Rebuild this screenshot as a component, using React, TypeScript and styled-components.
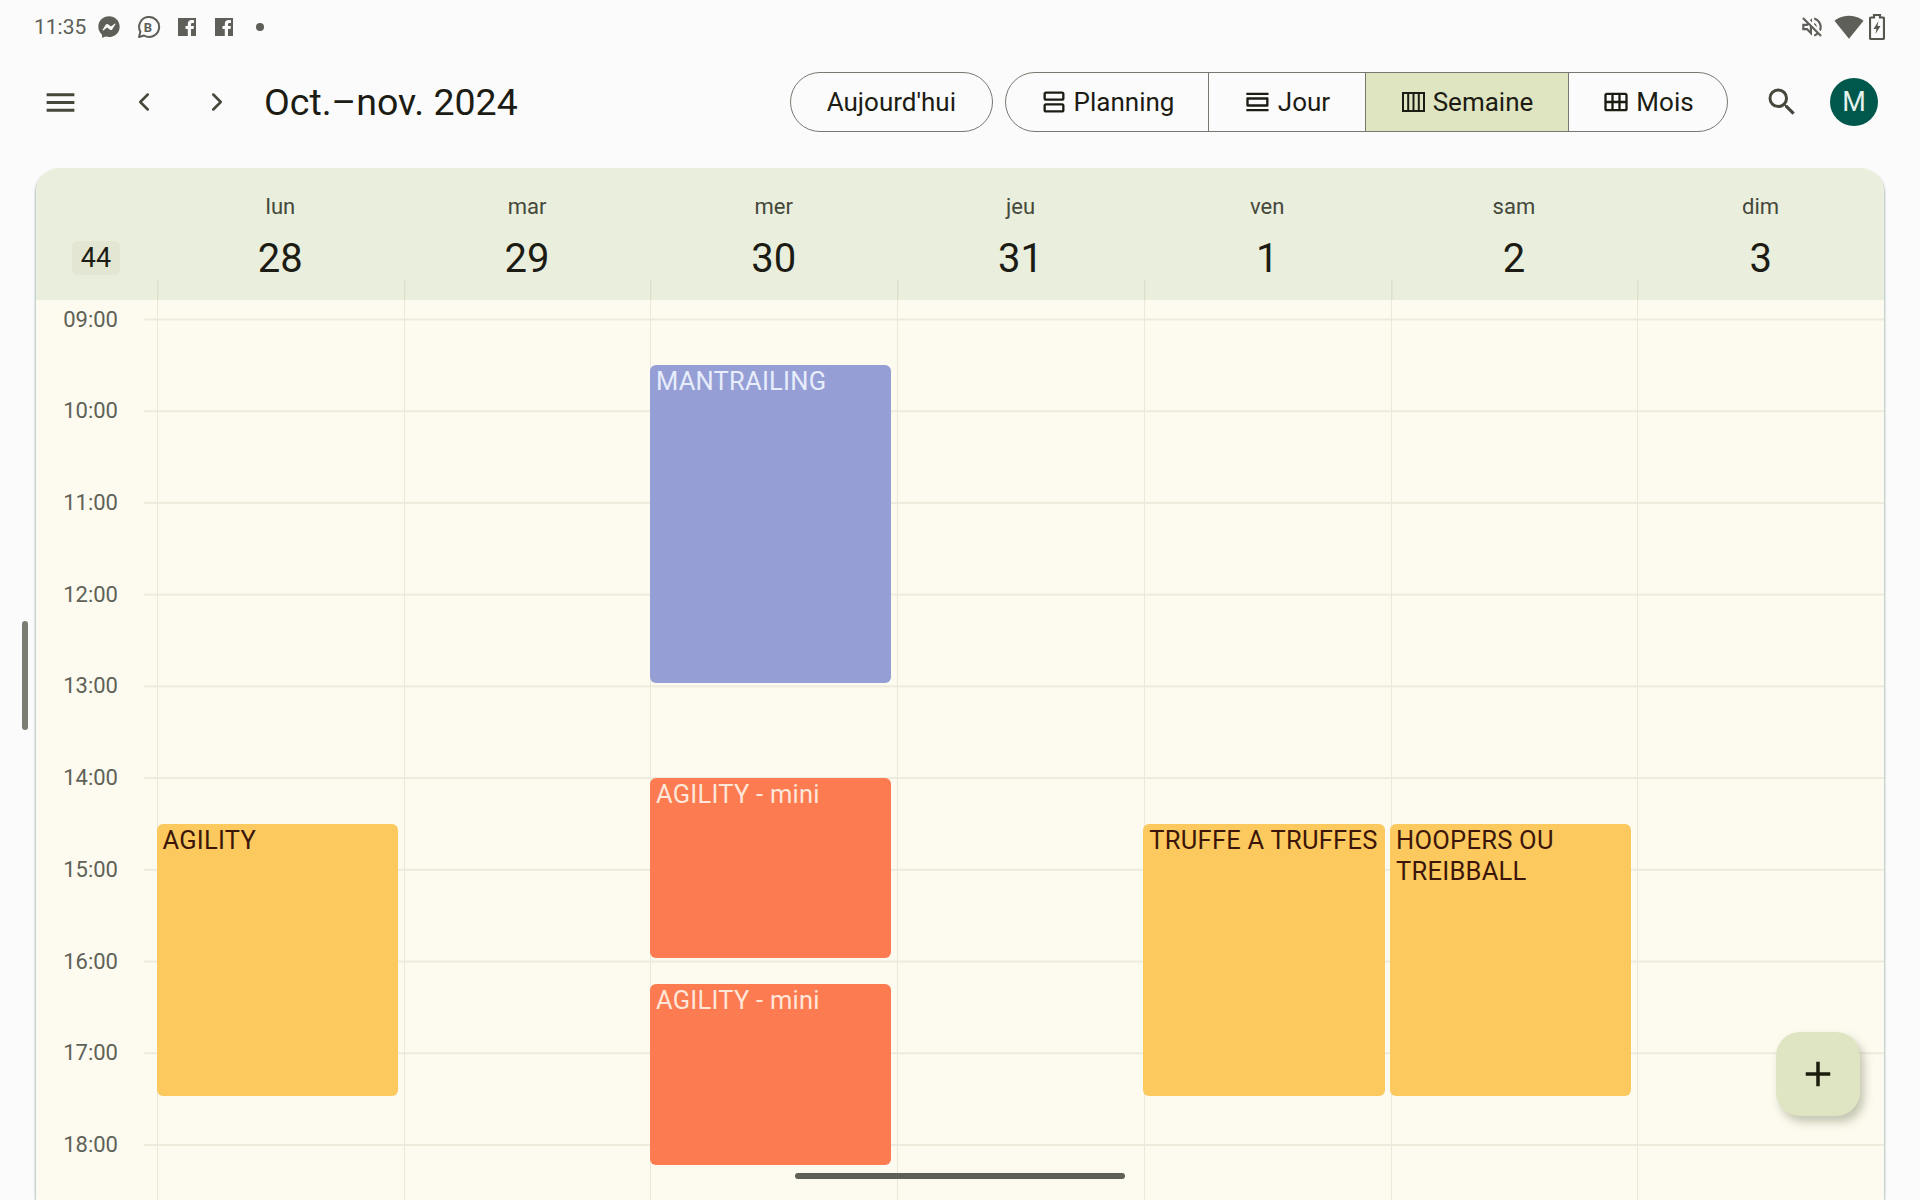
import React from "react";
import styled, { createGlobalStyle } from "styled-components";
import { ChevronLeft, ChevronRight } from "lucide-react";
import { FaFacebookMessenger } from "react-icons/fa";
import {
  MdAdd,
  MdMenu,
  MdOutlineCalendarViewMonth,
  MdOutlineViewAgenda,
  MdOutlineViewDay,
  MdOutlineVolumeOff,
  MdSearch,
  MdSignalWifi4Bar,
} from "react-icons/md";

const HOUR = 91.72;

const GlobalStyle = createGlobalStyle`
  html, body, #root {
    margin: 0;
    height: 100%;
  }

  body {
    background: #fafbfa;
    font-family: Roboto, "Noto Sans", sans-serif;
    overflow: hidden;
  }
`;

const Screen = styled.div`
  display: flex;
  flex-direction: column;
  position: relative;
  width: 1920px;
  height: 1200px;
  overflow: hidden;
`;

const StatusBar = styled.div`
  display: flex;
  align-items: center;
  height: 54px;
  padding: 0 35px 0 34px;
  color: #5d5f58;
  font-size: 21px;
  flex-shrink: 0;
`;

const StatusLeft = styled.div`
  display: flex;
  align-items: center;
  gap: 15px;
`;

const StatusTime = styled.span`
  margin-right: -3px;
`;

const StatusRight = styled.div`
  display: flex;
  align-items: center;
  gap: 9px;
  margin-left: auto;
`;

const WifiIcon = styled(MdSignalWifi4Bar)`
  margin-right: -4px;
`;

const Dot = styled.span`
  width: 8px;
  height: 8px;
  margin-left: 6px;
  border-radius: 50%;
  background: #5d5f58;
`;

const Toolbar = styled.div`
  display: flex;
  align-items: center;
  height: 96px;
  padding: 0 42px 0 36px;
  flex-shrink: 0;
`;

const IconButton = styled.div<{ $left?: number }>`
  display: flex;
  align-items: center;
  justify-content: center;
  width: 48px;
  height: 48px;
  margin-left: ${(p) => p.$left ?? 0}px;
  color: #44483b;
  flex-shrink: 0;
`;

const Title = styled.h1`
  margin: 0 0 0 23px;
  font-size: 37.5px;
  font-weight: 400;
  color: #1c1c14;
`;

const TodayPill = styled.div`
  display: flex;
  align-items: center;
  height: 60px;
  box-sizing: border-box;
  margin-left: auto;
  padding: 0 36px;
  border: 1.5px solid #777970;
  border-radius: 30px;
  font-size: 26px;
  color: #1c1c14;
`;

const Segments = styled.div`
  display: flex;
  height: 60px;
  box-sizing: border-box;
  margin: 0 30px 0 12px;
  border: 1.5px solid #777970;
  border-radius: 30px;
  overflow: hidden;
`;

const Segment = styled.div<{ $active?: boolean; $first?: boolean; $width: number }>`
  display: flex;
  align-items: center;
  justify-content: center;
  gap: 6px;
  width: ${(p) => p.$width}px;
  box-sizing: border-box;
  border-left: ${(p) => (p.$first ? "0" : "1.5px solid #777970")};
  background: ${(p) => (p.$active ? "#e0e5c1" : "transparent")};
  font-size: 26px;
  color: #1c1c14;
`;

const Avatar = styled.div`
  display: flex;
  align-items: center;
  justify-content: center;
  width: 48px;
  height: 48px;
  margin-left: 24px;
  border-radius: 50%;
  background: #00574b;
  color: #e6f2ee;
  font-size: 27px;
`;

const Card = styled.div`
  display: flex;
  flex-direction: column;
  flex: 1;
  min-height: 0;
  margin: 18px 36px 0;
  border-radius: 24px 24px 0 0;
  background: #fdfbef;
  box-shadow: -2px 1px 2px -1px rgba(110, 140, 140, 0.5), 2px 1px 2px -1px rgba(110, 140, 140, 0.5);
  overflow: hidden;
`;

const HeaderRow = styled.div`
  display: grid;
  grid-template-columns: 121px repeat(7, 1fr);
  height: 132px;
  background: #eaeedc;
  flex-shrink: 0;
`;

const WeekCell = styled.div`
  display: flex;
  align-items: flex-start;
  justify-content: center;
  padding-top: 73px;
`;

const WeekBadge = styled.div`
  display: flex;
  align-items: center;
  justify-content: center;
  width: 48px;
  height: 34px;
  margin-right: 1px;
  border-radius: 6px;
  background: #e2e6d3;
  font-size: 27px;
  color: #1c1c14;
`;

const DayHead = styled.div`
  display: flex;
  flex-direction: column;
  align-items: center;
  padding-top: 26px;
  background: linear-gradient(#dde0ca, #dde0ca) left bottom / 1.5px 20px no-repeat;
`;

const DayName = styled.div`
  height: 26px;
  line-height: 26px;
  font-size: 22px;
  color: #44483b;
`;

const DayNumber = styled.div`
  height: 48px;
  margin-top: 15px;
  line-height: 48px;
  font-size: 40px;
  color: #1c1c14;
`;

const Body = styled.div`
  display: grid;
  grid-template-columns: 121px repeat(7, 1fr);
  flex: 1;
  min-height: 0;
  overflow: hidden;
`;

const Gutter = styled.div`
  display: flex;
  flex-direction: column;
  align-items: flex-end;
  gap: ${HOUR - 30}px;
  padding: 4.5px 39px 0 0;
  background: linear-gradient(to bottom, #ecebdc 1.5px, transparent 1.5px) right 0 top 18.5px / 13px ${HOUR}px repeat-y;
`;

const TimeLabel = styled.div`
  height: 30px;
  line-height: 30px;
  font-size: 22px;
  color: #5f6157;
`;

const DayColumn = styled.div`
  display: grid;
  grid-template-columns: 1fr;
  grid-auto-rows: ${HOUR / 4}px;
  padding-top: 19.5px;
  border-left: 1.5px solid #e9e9d9;
  background: linear-gradient(to bottom, #ecebdc 1.5px, transparent 1.5px) 0 18.5px / 100% ${HOUR}px repeat-y;
`;

const eventColors = {
  blue: { bg: "#959fd6", fg: "#e8edfb" },
  orange: { bg: "#fd7b50", fg: "#fee6da" },
  yellow: { bg: "#fcc95f", fg: "#3b1608" },
};

const Event = styled.div<{ $start: number; $span: number; $tone: keyof typeof eventColors }>`
  grid-row: ${(p) => p.$start + 1} / span ${(p) => p.$span};
  grid-column: 1;
  margin: 0 6px 3px -1.5px;
  padding: 1px 0 0 6px;
  border-radius: 6px;
  background: ${(p) => eventColors[p.$tone].bg};
  color: ${(p) => eventColors[p.$tone].fg};
  font-size: 25.5px;
  letter-spacing: 0.25px;
  line-height: 31px;
`;

const ScrollThumb = styled.div`
  position: absolute;
  left: 22px;
  top: 621px;
  width: 6px;
  height: 109px;
  border-radius: 3px;
  background: #7b7d72;
`;

const HomeBar = styled.div`
  position: absolute;
  left: 795px;
  top: 1173px;
  width: 330px;
  height: 6px;
  border-radius: 3px;
  background: #5e6058;
`;

const Fab = styled.div`
  position: absolute;
  left: 1776px;
  top: 1032px;
  display: flex;
  align-items: center;
  justify-content: center;
  width: 84px;
  height: 84px;
  border-radius: 24px;
  background: #dfe4c2;
  color: #1c1c0c;
  box-shadow: 4px 6px 10px rgba(90, 95, 60, 0.35);
`;

const days = [
  { name: "lun", num: 28 },
  { name: "mar", num: 29 },
  { name: "mer", num: 30 },
  { name: "jeu", num: 31 },
  { name: "ven", num: 1 },
  { name: "sam", num: 2 },
  { name: "dim", num: 3 },
];

const hours = ["09:00", "10:00", "11:00", "12:00", "13:00", "14:00", "15:00", "16:00", "17:00", "18:00"];

type Ev = { day: number; title: string; start: number; span: number; tone: keyof typeof eventColors };

// start and span are in quarter hours from 09:00
const events: Ev[] = [
  { day: 0, title: "AGILITY", start: 22, span: 12, tone: "yellow" },
  { day: 2, title: "MANTRAILING", start: 2, span: 14, tone: "blue" },
  { day: 2, title: "AGILITY - mini", start: 20, span: 8, tone: "orange" },
  { day: 2, title: "AGILITY - mini", start: 29, span: 8, tone: "orange" },
  { day: 4, title: "TRUFFE A TRUFFES", start: 22, span: 12, tone: "yellow" },
  { day: 5, title: "HOOPERS OU TREIBBALL", start: 22, span: 12, tone: "yellow" },
];

const BusinessChat = () => (
  <svg width="26" height="26" viewBox="0 0 26 26" fill="none" stroke="currentColor" strokeWidth="2">
    <path d="M4 23l1.400-5.200A10 10 0 1 1 9 21.500z" strokeLinejoin="round" />
    <text x="13" y="17.500" fontSize="13" fontWeight="700" textAnchor="middle" fill="currentColor" stroke="none">
      B
    </text>
  </svg>
);

const FacebookSquare = () => (
  <svg width="22" height="22" viewBox="0 0 22 22">
    <path
      fillRule="evenodd"
      fill="currentColor"
      d="M2 2h18v18h-5v-7h2.500l.5-3h-3V8.500c0-1 .4-1.500 1.500-1.500H18V4.300c-.6-.1-1.500-.2-2.400-.2-2.300 0-3.800 1.400-3.800 3.900V10H9.500v3h2.300v7H2z"
    />
  </svg>
);

const WeekIcon = () => (
  <svg width="26" height="22" viewBox="0 0 26 22" fill="none" stroke="currentColor" strokeWidth="2">
    <rect x="2" y="2" width="21" height="18" />
    <path d="M7.200 2v18M12.500 2v18M17.800 2v18" />
  </svg>
);

const Battery = () => (
  <svg width="16" height="26" viewBox="0 0 16 26" fill="none">
    <path d="M5 1h6v2.500h3a1 1 0 0 1 1 1V24a1 1 0 0 1-1 1H2a1 1 0 0 1-1-1V4.500a1 1 0 0 1 1-1h3z" stroke="#55574f" strokeWidth="2.200" />
    <path d="M9.500 7l-5 8h3l-1 5 5-8h-3z" fill="#55574f" />
  </svg>
);

const App: React.FC = () => {
  return (
    <Screen>
      <GlobalStyle />
      <StatusBar>
        <StatusLeft>
          <StatusTime>11:35</StatusTime>
          <FaFacebookMessenger size={22} />
          <BusinessChat />
          <FacebookSquare />
          <FacebookSquare />
          <Dot />
        </StatusLeft>
        <StatusRight>
          <MdOutlineVolumeOff size={26} />
          <WifiIcon size={30} />
          <Battery />
        </StatusRight>
      </StatusBar>
      <Toolbar>
        <IconButton>
          <MdMenu size={37} />
        </IconButton>
        <IconButton $left={36}>
          <ChevronLeft size={30} />
        </IconButton>
        <IconButton $left={25}>
          <ChevronRight size={30} />
        </IconButton>
        <Title>Oct.–nov. 2024</Title>
        <TodayPill>Aujourd'hui</TodayPill>
        <Segments>
          <Segment $first $width={202}>
            <MdOutlineViewAgenda size={28} />
            Planning
          </Segment>
          <Segment $width={157}>
            <MdOutlineViewDay size={28} />
            Jour
          </Segment>
          <Segment $active $width={203}>
            <WeekIcon />
            Semaine
          </Segment>
          <Segment $width={159}>
            <MdOutlineCalendarViewMonth size={28} />
            Mois
          </Segment>
        </Segments>
        <IconButton>
          <MdSearch size={36} />
        </IconButton>
        <Avatar>M</Avatar>
      </Toolbar>
      <Card>
        <HeaderRow>
          <WeekCell>
            <WeekBadge>44</WeekBadge>
          </WeekCell>
          {days.map((d) => (
            <DayHead key={d.name}>
              <DayName>{d.name}</DayName>
              <DayNumber>{d.num}</DayNumber>
            </DayHead>
          ))}
        </HeaderRow>
        <Body>
          <Gutter>
            {hours.map((h) => (
              <TimeLabel key={h}>{h}</TimeLabel>
            ))}
          </Gutter>
          {days.map((d, i) => (
            <DayColumn key={d.name}>
              {events
                .filter((e) => e.day === i)
                .map((e) => (
                  <Event key={e.start} $start={e.start} $span={e.span} $tone={e.tone}>
                    {e.title}
                  </Event>
                ))}
            </DayColumn>
          ))}
        </Body>
      </Card>
      <ScrollThumb />
      <HomeBar />
      <Fab>
        <MdAdd size={42} />
      </Fab>
    </Screen>
  );
};

export default App;
